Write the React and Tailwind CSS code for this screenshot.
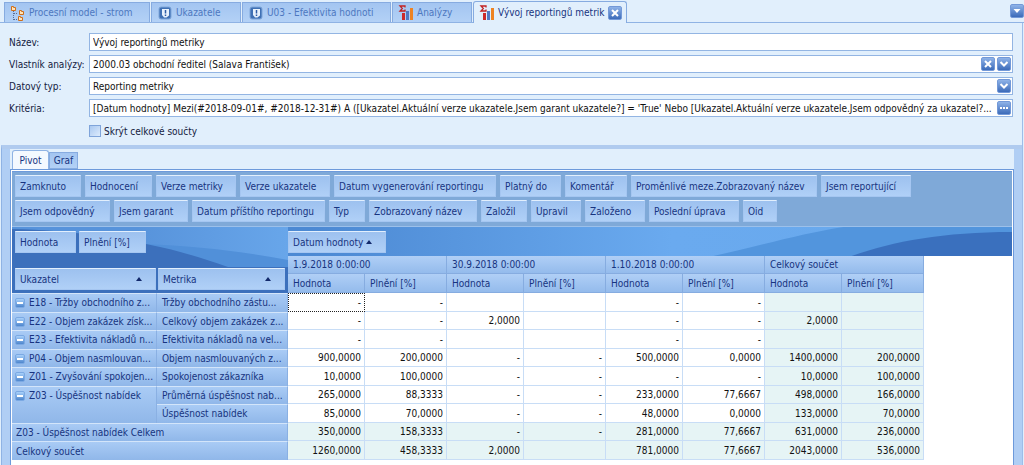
import { useState } from 'react'

const TABS = [
  { label: 'Procesní model - strom', icon: 'tree', width: 'w-[146px]' },
  { label: 'Ukazatele', icon: 'alert', width: 'w-[90px]' },
  { label: 'U03 - Efektivita hodnoti', icon: 'alert', width: 'w-[149px]' },
  { label: 'Analýzy', icon: 'chart', width: 'w-[80px]' },
]

const FILTER_ROWS = [
  [
    ['Zamknuto', 'w-[66px]'],
    ['Hodnocení', 'w-[67px]'],
    ['Verze metriky', 'w-[80px]'],
    ['Verze ukazatele', 'w-[90px]'],
    ['Datum vygenerování reportingu', 'w-[162px]'],
    ['Platný do', 'w-[61px]'],
    ['Komentář', 'w-[62px]'],
    ['Proměnlivé meze.Zobrazovaný název', 'w-[186px]'],
    ['Jsem reportující', 'w-[90px]'],
  ],
  [
    ['Jsem odpovědný', 'w-[95px]'],
    ['Jsem garant', 'w-[74px]'],
    ['Datum příštího reportingu', 'w-[133px]'],
    ['Typ', 'w-[36px]'],
    ['Zobrazovaný název', 'w-[108px]'],
    ['Založil', 'w-[46px]'],
    ['Upravil', 'w-[50px]'],
    ['Založeno', 'w-[60px]'],
    ['Poslední úprava', 'w-[90px]'],
    ['Oid', 'w-[34px]'],
  ],
]

const PERIODS = ['1.9.2018 0:00:00', '30.9.2018 0:00:00', '1.10.2018 0:00:00', 'Celkový součet']

const ROWS = [
  { group: 'E18 - Tržby obchodního z...', metric: 'Tržby obchodního zástu...', values: ['-', '-', '', '', '-', '-', '', ''] },
  { group: 'E22 - Objem zakázek získ...', metric: 'Celkový objem zakázek z...', values: ['-', '-', '2,0000', '', '-', '-', '2,0000', ''] },
  { group: 'E23 - Efektivita nákladů n...', metric: 'Efektivita nákladů na vel...', values: ['-', '-', '', '', '-', '-', '', ''] },
  { group: 'P04 - Objem nasmlouvan...', metric: 'Objem nasmlouvaných z...', values: ['900,0000', '200,0000', '-', '-', '500,0000', '0,0000', '1400,0000', '200,0000'] },
  { group: 'Z01 - Zvyšování spokojen...', metric: 'Spokojenost zákazníka', values: ['10,0000', '100,0000', '-', '-', '-', '-', '10,0000', '100,0000'] },
  { group: 'Z03 - Úspěšnost nabídek', span: 2, metric: 'Průměrná úspěšnost nab...', values: ['265,0000', '88,3333', '-', '-', '233,0000', '77,6667', '498,0000', '166,0000'] },
  { metric: 'Úspěšnost nabídek', values: ['85,0000', '70,0000', '-', '-', '48,0000', '0,0000', '133,0000', '70,0000'] },
  { total: 'Z03 - Úspěšnost nabídek Celkem', values: ['350,0000', '158,3333', '-', '-', '281,0000', '77,6667', '631,0000', '236,0000'] },
  { total: 'Celkový součet', values: ['1260,0000', '458,3333', '2,0000', '', '781,0000', '77,6667', '2043,0000', '536,0000'] },
]

function TabIcon({ name }) {
  if (name === 'tree') {
    return (
      <svg viewBox="0 0 16 16" className="h-4 w-4 shrink-0">
        <path d="M3.500 6v9M4 8.500h4M4 14.500h4" fill="none" stroke="#5a6c90" strokeDasharray="1 1" />
        <g fill="#ffe3b8" stroke="#cf6f1a">
          <path d="M1.500 1.500h2v1h2v3h-4z" />
          <path d="M9.500 5.500h2v1h2v3h-4z" />
          <path d="M8.500 11.500h2v1h2v3h-4z" />
        </g>
      </svg>
    )
  }
  if (name === 'alert') {
    return (
      <svg viewBox="0 0 14 14" className="mx-px h-3.5 w-3.5 shrink-0">
        <rect x="1" y="1" width="12" height="12" rx="2" fill="#3f70b4" stroke="#7ea6da" />
        <path d="M4 3h7v6.500l-2.500 2H6L4 9z" fill="#e8f2fd" />
        <path d="M7.500 4v3.500M7.500 8.500v1.500" stroke="#2c5ca6" strokeWidth="1.500" />
      </svg>
    )
  }
  return (
    <svg viewBox="0 0 16 16" className="h-4 w-4 shrink-0">
      <path d="M7 2.500V1H2l2.300 2.500L2 6h5V4.500" fill="none" stroke="#c22222" strokeWidth="1.300" />
      <rect x="4" y="8" width="3" height="7" fill="#cc2a2a" />
      <rect x="8" y="6" width="3" height="9" fill="#5179c4" />
      <rect x="12" y="3" width="3" height="12" fill="#ee8322" />
    </svg>
  )
}

const GLYPHS = {
  close: 'M3 3l6 6M9 3L3 9',
  chevron: 'M2.500 4L6 7.500 9.500 4',
  dots: 'M2 6h2M5 6h2M8 6h2',
}

function ButtonFace({ glyph }) {
  if (glyph === 'menu') {
    return (
      <svg viewBox="0 0 12 12" className="block h-full w-full">
        <path d="M2.500 4h7L6 8z" fill="#fff" />
      </svg>
    )
  }
  return (
    <svg viewBox="0 0 12 12" className="block h-full w-full">
      <path d={GLYPHS[glyph]} fill="none" stroke="#fff" strokeWidth="2" />
    </svg>
  )
}

const FACE = 'h-[14px] w-[14px] shrink-0 rounded-[2px] border border-[#7399d8] bg-linear-to-b from-[#8fb3e8] to-[#3c6bb9]'

function SmallButton({ glyph, label }) {
  return (
    <button type="button" aria-label={label} className={FACE}>
      <ButtonFace glyph={glyph} />
    </button>
  )
}

function Field({ id, label, children }) {
  return (
    <div className="flex h-[18px] items-center">
      <label htmlFor={id} className="w-20 shrink-0 whitespace-nowrap text-[#14213f]">{label}</label>
      <div className="relative flex h-[18px] min-w-0 flex-1 items-center gap-0.5 border border-[#93b5e3] bg-white pr-px">
        {children}
      </div>
    </div>
  )
}

const INPUT = 'h-4 min-w-0 flex-1 truncate bg-transparent pl-[3px] text-[#111] outline-none'

function Chip({ label, width, sorted }) {
  return (
    <button
      type="button"
      className={`flex h-[22px] shrink-0 items-center justify-between whitespace-nowrap border border-[#a5c6f1] border-t-[#e2effd] bg-linear-to-b from-[#9dc1ef] to-[#b0d0f7] pl-1 pr-3 text-left font-normal text-[#17347f] ${width}`}
    >
      {label}
      {sorted && <SortMark />}
    </button>
  )
}

function SortMark() {
  return (
    <svg viewBox="0 0 8 4" className="h-1 w-2 shrink-0">
      <path d="M1 4l3-4 3 4z" fill="#12296b" />
    </svg>
  )
}

function Collapse() {
  return (
    <button type="button" aria-label="Sbalit" className="h-2.5 w-2.5 shrink-0 rounded-[2px] border border-[#7ba9e3] bg-linear-to-b from-[#a8d0fa] to-[#4e86cd]">
      <span className="mx-auto block h-0.5 w-1.5 bg-white" />
    </button>
  )
}

function Swoosh() {
  return (
    <>
      <svg viewBox="0 0 998 29" preserveAspectRatio="none" className="absolute left-0 top-0 h-[29px] w-full">
        <defs>
          <linearGradient id="sky">
            <stop offset="0.300" stopColor="#4c89d3" />
            <stop offset="0.660" stopColor="#6aaaef" />
            <stop offset="0.850" stopColor="#69a9ed" />
          </linearGradient>
        </defs>
        <rect width="998" height="29" fill="url(#sky)" />
        <path d="M700 29C750 18 790 6 830 0H998V29z" fill="#5295dd" />
        <path d="M838 29C880 14 930 5 998 5V29z" fill="#3a70be" />
      </svg>
      <svg viewBox="0 0 276 66" className="absolute left-0 top-0 h-[66px] w-[276px]">
        <defs>
          <linearGradient id="left" x1="0" x2="1">
            <stop offset="0.450" stopColor="#5793db" />
            <stop offset="1" stopColor="#68a6ea" />
          </linearGradient>
        </defs>
        <rect width="276" height="66" fill="url(#left)" />
        <path d="M0 2C60 3 100 11 134 17C180 19 230 24 276 33V66H0z" fill="#5190d9" />
        <path d="M0 2C60 3 100 11 134 17C165 23 190 31 216 40H276V66H0z" fill="#3c70bc" />
      </svg>
    </>
  )
}

const COL_HEAD = 'border-r border-b border-[#86ace0] bg-linear-to-b from-[#b0cff6] to-[#94bbec] pl-[5px] text-left font-normal'
const ROW_HEAD = 'border-r border-t border-r-[#8ab0e3] border-t-[#d3e5fa] bg-linear-to-b from-[#a9cbf5] to-[#90b7e9] text-left font-normal text-[#17347f] whitespace-nowrap overflow-hidden'

function PivotTable() {
  return (
    <table className="relative w-[912px] table-fixed border-separate border-spacing-0">
      <colgroup>
        <col className="w-[145px]" />
        <col className="w-[131px]" />
        {PERIODS.map((p) => [
          <col key={`${p}-h`} className="w-[77px]" />,
          <col key={`${p}-p`} className="w-[82px]" />,
        ])}
      </colgroup>
      <thead className="text-[#17347f]">
        <tr className="h-[18px]">
          <th rowSpan={2} className="pb-[3px] pl-[3px] pr-px align-bottom">
            <Chip label="Ukazatel" width="w-full" sorted />
          </th>
          <th rowSpan={2} className="pb-[3px] pl-px pr-[3px] align-bottom">
            <Chip label="Metrika" width="w-full" sorted />
          </th>
          {PERIODS.map((p) => (
            <th key={p} colSpan={2} className={COL_HEAD}>{p}</th>
          ))}
        </tr>
        <tr className="h-[19px]">
          {PERIODS.map((p) => [
            <th key={`${p}-h`} className={COL_HEAD}>Hodnota</th>,
            <th key={`${p}-p`} className={COL_HEAD}>Plnění [%]</th>,
          ])}
        </tr>
      </thead>
      <tbody>
        {ROWS.map((row, i) => (
          <tr key={row.metric || row.total} className="odd:h-[19px] even:h-[18px]">
            {row.total && <th colSpan={2} className={`${ROW_HEAD} pl-1`}>{row.total}</th>}
            {row.group && (
              <th rowSpan={row.span || 1} className={`${ROW_HEAD} pl-[3px] align-top`}>
                <div className="flex items-center gap-1"><Collapse />{row.group}</div>
              </th>
            )}
            {row.metric && <th className={`${ROW_HEAD} pl-[5px] align-top`}>{row.metric}</th>}
            {row.values.map((value, c) => {
              const shaded = row.total || c > 5
              const focused = i === 0 && c === 0
              return (
                <td
                  key={c}
                  className={`pr-[3px] text-right text-[#111] ${shaded ? 'bg-[#e6f4f5]' : 'bg-white'} ${focused ? 'border border-dotted border-[#222]' : 'border-b border-r border-[#c8ddf6]'}`}
                >
                  {value}
                </td>
              )
            })}
          </tr>
        ))}
      </tbody>
    </table>
  )
}

export default function App() {
  const [hideTotals, setHideTotals] = useState(false)

  return (
    <div className="flex min-h-screen flex-col bg-[#e1effc] font-['DejaVu_Sans_Condensed','DejaVu_Sans',sans-serif] text-[10px] leading-[17px] font-stretch-condensed">
      <nav className="flex h-[23px] items-end border-b border-[#8fb3e4] pl-1">
        {TABS.map((tab) => (
          <button
            key={tab.label}
            type="button"
            className={`mr-px flex h-5 items-center gap-[3px] whitespace-nowrap border border-b-0 border-[#86abe0] bg-linear-to-b from-[#a3c5f1] to-[#b3d1f6] pl-[5px] text-[#4d78c0] ${tab.width}`}
          >
            <TabIcon name={tab.icon} />
            {tab.label}
          </button>
        ))}
        <div className="-mb-px flex h-[22px] w-[154px] items-center rounded-t-[3px] border border-b-0 border-[#86abe0] bg-[#e1effc] pl-[5px]">
          <button type="button" className="flex items-center gap-[3px] whitespace-nowrap text-[#17347f]">
            <TabIcon name="chart" />
            Vývoj reportingů metrik
          </button>
          <span className="ml-auto mr-1 flex"><SmallButton glyph="close" label="Zavřít" /></span>
        </div>
        <span className="mb-1 ml-auto flex"><SmallButton glyph="menu" label="Seznam karet" /></span>
      </nav>

      <main className="mr-px flex flex-1 flex-col border-r border-[#9dbde9]">
        <form className="flex flex-col gap-1 pb-[5px] pl-[9px] pr-[9px] pt-2.5">
          <Field id="name" label="Název:">
            <input id="name" className={INPUT} defaultValue="Vývoj reportingů metriky" />
          </Field>
          <Field id="owner" label="Vlastník analýzy:">
            <input id="owner" className={INPUT} defaultValue="2000.03 obchodní ředitel (Salava František)" />
            <SmallButton glyph="close" label="Vymazat" />
            <SmallButton glyph="chevron" label="Vybrat" />
          </Field>
          <Field id="type" label="Datový typ:">
            <select id="type" className={`${INPUT} appearance-none`}>
              <option>Reporting metriky</option>
            </select>
            <span className={`${FACE} pointer-events-none`}><ButtonFace glyph="chevron" /></span>
          </Field>
          <Field id="criteria" label="Kritéria:">
            <input
              id="criteria"
              className={INPUT}
              defaultValue="[Datum hodnoty] Mezi(#2018-09-01#, #2018-12-31#) A ([Ukazatel.Aktuální verze ukazatele.Jsem garant ukazatele?] = 'True' Nebo [Ukazatel.Aktuální verze ukazatele.Jsem odpovědný za ukazatel?..."
            />
            <SmallButton glyph="dots" label="Upravit kritéria" />
          </Field>
          <label className="mt-px flex h-[18px] items-center gap-[3px] pl-20 text-[#14213f]">
            <input
              type="checkbox"
              checked={hideTotals}
              onChange={(e) => setHideTotals(e.target.checked)}
              className="h-3 w-3 appearance-none border border-[#7fa4da] bg-linear-to-br from-[#a9c8f0] to-[#dcebfc] checked:bg-[#3c6bb9]"
            />
            Skrýt celkové součty
          </label>
        </form>

        <section className="ml-px flex flex-1 flex-col border-l border-t-4 border-l-[#8fb3e4] border-t-[#b0cbef] bg-[#b0cef4] pl-2 pr-2">
          <div className="flex flex-1 flex-col bg-[#e1effc]">
            <div className="flex h-5 items-end pl-0.5">
              <button type="button" className="h-[19px] w-[37px] rounded-t-[3px] border border-b-0 border-[#8fb3e4] bg-[#f4f9ff] text-[#17347f]">Pivot</button>
              <button type="button" className="h-[17px] w-[29px] border border-[#86abe0] bg-linear-to-b from-[#a3c5f1] to-[#b3d1f6] leading-[15px] text-[#17347f]">Graf</button>
            </div>
            <div className="flex flex-1 flex-col border-x border-t border-[#6d9adb] bg-white px-px pt-px">
              <div className="flex flex-col gap-[3px] border-b border-t border-b-[#9cc0ea] border-t-[#6d9adb] bg-[#7fa9d8] pb-1 pl-[3px] pt-[3px]">
                {FILTER_ROWS.map((row) => (
                  <div key={row[0][0]} className="flex gap-1">
                    {row.map(([label, width]) => <Chip key={label} label={label} width={width} />)}
                  </div>
                ))}
              </div>
              <div className="relative">
                <Swoosh />
                <div className="relative flex h-[29px] pl-[3px] pt-1">
                  <div className="flex w-[273px] gap-[3px]">
                    <Chip label="Hodnota" width="w-[61px]" />
                    <Chip label="Plnění [%]" width="w-[67px]" />
                  </div>
                  <Chip label="Datum hodnoty" width="w-[98px]" sorted />
                </div>
                <PivotTable />
              </div>
            </div>
          </div>
        </section>
      </main>
    </div>
  )
}
